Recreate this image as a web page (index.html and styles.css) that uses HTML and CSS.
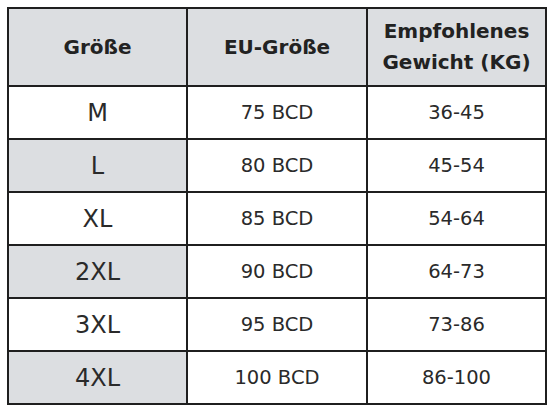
FILE: index.html
```html
<!DOCTYPE html>
<html lang="de">
<head>
<meta charset="utf-8">
<title>Größentabelle</title>
<link rel="stylesheet" href="styles.css">
</head>
<body>
<div class="size-table" role="table">
  <div class="cell head" role="columnheader">Größe</div>
  <div class="cell head" role="columnheader">EU-Größe</div>
  <div class="cell head" role="columnheader">Empfohlenes<br>Gewicht (KG)</div>

  <div class="cell size">M</div>
  <div class="cell">75 BCD</div>
  <div class="cell">36-45</div>

  <div class="cell size shade">L</div>
  <div class="cell">80 BCD</div>
  <div class="cell">45-54</div>

  <div class="cell size">XL</div>
  <div class="cell">85 BCD</div>
  <div class="cell">54-64</div>

  <div class="cell size shade">2XL</div>
  <div class="cell">90 BCD</div>
  <div class="cell">64-73</div>

  <div class="cell size">3XL</div>
  <div class="cell">95 BCD</div>
  <div class="cell">73-86</div>

  <div class="cell size shade">4XL</div>
  <div class="cell">100 BCD</div>
  <div class="cell">86-100</div>
</div>
</body>
</html>
```

FILE: styles.css
```css
html, body {
  margin: 0;
  padding: 0;
  background: #ffffff;
}

body {
  padding: 7px 0 0 7px;
  font-family: "DejaVu Sans", Verdana, sans-serif;
  color: #2a2a2a;
}

.size-table {
  display: grid;
  grid-template-columns: 177px 178px 177px;
  grid-template-rows: 76px repeat(6, 51px);
  gap: 2px;
  padding: 2px;
  width: max-content;
  background: #1f1f1f;
}

.cell {
  display: flex;
  align-items: center;
  justify-content: center;
  text-align: center;
  background: #ffffff;
  font-size: 19.5px;
}

.head {
  background: #dcdee1;
  font-weight: bold;
  font-size: 20px;
  line-height: 31px;
  color: #222222;
}

.size {
  font-size: 24px;
}

.shade {
  background: #dcdee1;
}
```
